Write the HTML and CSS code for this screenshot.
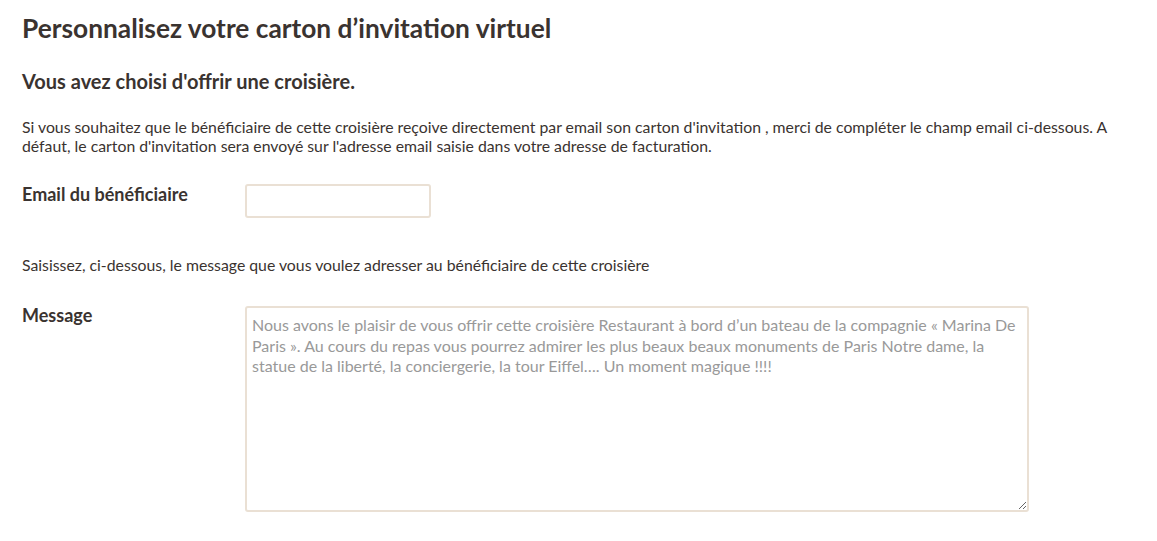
FILE: index.html
```html
<!DOCTYPE html>
<html lang="fr">
<head>
    <meta charset="UTF-8">
    <title>Carton d'invitation virtuel</title>
    <link rel="stylesheet" href="styles.css">
</head>
<body>
    <div class="page">
        <h1>Personnalisez votre carton d’invitation virtuel</h1>
        <h2>Vous avez choisi d'offrir une croisière.</h2>
        <p class="intro">Si vous souhaitez que le bénéficiaire de cette croisière reçoive directement par email son carton d'invitation , merci de compléter le champ email ci-dessous. A défaut, le carton d'invitation sera envoyé sur l'adresse email saisie dans votre adresse de facturation.</p>

        <div class="field">
            <label for="email">Email du bénéficiaire</label>
            <input type="email" id="email" class="input-email">
        </div>

        <p class="hint">Saisissez, ci-dessous, le message que vous voulez adresser au bénéficiaire de cette croisière</p>

        <div class="field">
            <label for="message">Message</label>
            <textarea id="message" class="input-message" placeholder="Nous avons le plaisir de vous offrir cette croisière Restaurant à bord d’un bateau de la compagnie « Marina De Paris ». Au cours du repas vous pourrez admirer les plus beaux beaux monuments de Paris Notre dame, la statue de la liberté, la conciergerie, la tour Eiffel…. Un moment magique !!!!"></textarea>
        </div>
    </div>
</body>
</html>
```

FILE: styles.css
```css
body {
    margin: 0;
    font-family: Lato, "Open Sans", sans-serif;
    color: #3a3330;
    background: #fff;
}

.page {
    padding: 12px 22px;
}

h1 {
    font-size: 26.3px;
    font-weight: bold;
    margin: 0 0 25px;
    line-height: 32px;
}

h2 {
    font-size: 20px;
    font-weight: bold;
    margin: 0 0 24px;
    line-height: 24px;
}

.intro {
    font-size: 15.8px;
    line-height: 19px;
    margin: 0 0 28px;
}

.field {
    display: flex;
    align-items: flex-start;
}

.field label {
    width: 223px;
    font-size: 18px;
    font-weight: bold;
    line-height: 22px;
}

.input-email {
    width: 186px;
    height: 34px;
    box-sizing: border-box;
    border: 2px solid #eae0d4;
    border-radius: 3px;
    margin: 1px 0 0;
    padding: 4px 6px;
    font-family: inherit;
}

.hint {
    font-size: 15.8px;
    line-height: 19px;
    margin: 37px 0 30px;
}

.input-message {
    width: 784px;
    height: 206px;
    box-sizing: border-box;
    border: 2px solid #eae0d4;
    border-radius: 3px;
    margin: 2px 0 0;
    padding: 7px 5px;
    font-family: inherit;
    font-size: 16px;
    line-height: 20.5px;
    color: #3a3330;
}

.input-message::placeholder {
    color: #999;
}
```
